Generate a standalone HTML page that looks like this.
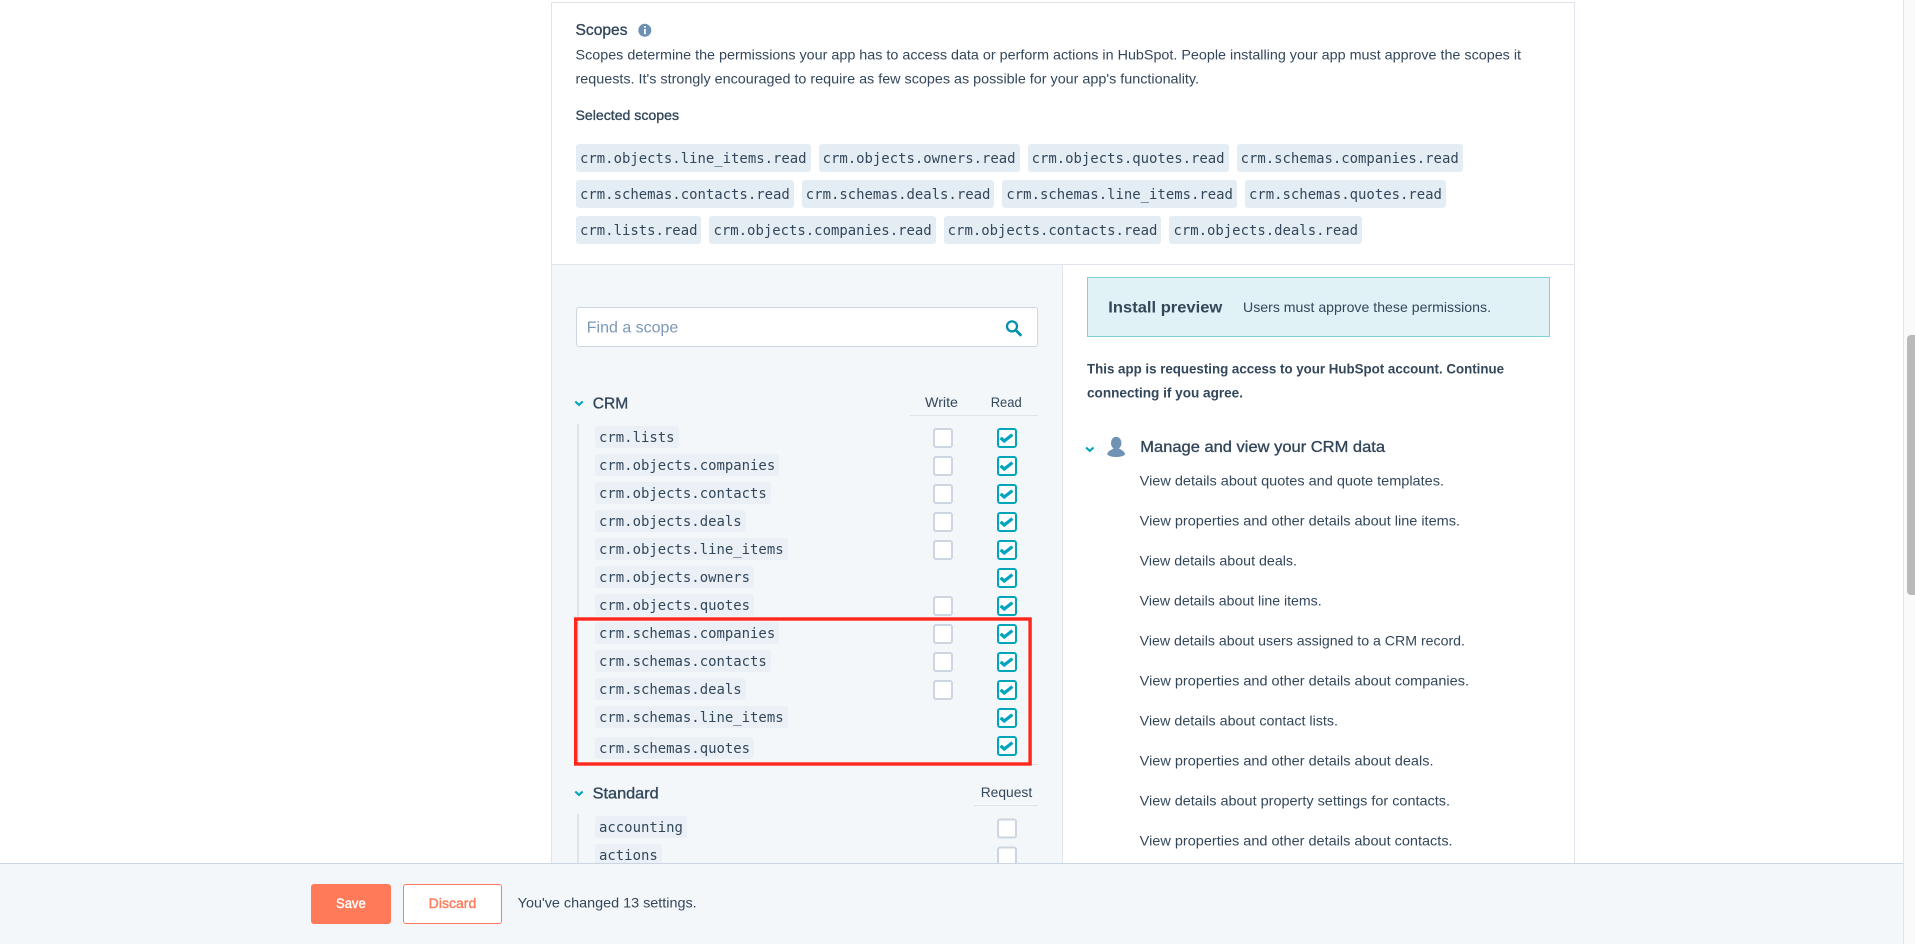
<!DOCTYPE html>
<html lang="en"><head><meta charset="utf-8"><title>Scopes</title>
<style>
html,body{margin:0;padding:0;background:#fff}
body{position:relative;width:1915px;height:944px;overflow:hidden;font-family:"Liberation Sans",sans-serif;color:#33475b}
.a{position:absolute}
.row{position:absolute;left:576px;display:flex;gap:8px}
code{font-family:"DejaVu Sans Mono","Liberation Mono",monospace;font-size:13.95px;color:#33475b;background:#e5edf4;border-radius:3px;padding:0 4px;display:block;white-space:pre}
.row code{height:28px;line-height:31px}
.t{position:absolute;left:595px;height:22px;line-height:25px;background:#eaf0f6}
svg{position:absolute;left:0;top:0}
text{font-family:"Liberation Sans",sans-serif;fill:#33475b;font-size:14px}
.m{stroke:#33475b;stroke-width:.35px}
</style></head>
<body>
<!-- panel frame -->
<div class="a" style="left:551px;top:2px;width:1024px;height:1px;background:#dfe3eb"></div>
<div class="a" style="left:551px;top:2px;width:1px;height:862px;background:#dfe3eb"></div>
<div class="a" style="left:1574px;top:2px;width:1px;height:862px;background:#dfe3eb"></div>
<div class="a" style="left:552px;top:264px;width:1022px;height:1px;background:#dfe3eb"></div>
<div class="a" style="left:552px;top:265px;width:510px;height:598px;background:#f4f7fa"></div>
<div class="a" style="left:1062px;top:265px;width:1px;height:598px;background:#dfe3eb"></div>

<!-- selected scopes -->
<div class="row" style="top:144px"><code>crm.objects.line_items.read</code><code>crm.objects.owners.read</code><code>crm.objects.quotes.read</code><code>crm.schemas.companies.read</code></div>
<div class="row" style="top:180px"><code>crm.schemas.contacts.read</code><code>crm.schemas.deals.read</code><code>crm.schemas.line_items.read</code><code>crm.schemas.quotes.read</code></div>
<div class="row" style="top:216px"><code>crm.lists.read</code><code>crm.objects.companies.read</code><code>crm.objects.contacts.read</code><code>crm.objects.deals.read</code></div>

<!-- search -->
<div class="a" style="left:576px;top:307px;width:460px;height:38px;background:#fff;border:1px solid #cbd6e2;border-radius:3px"></div>

<!-- table rules -->
<div class="a" style="left:910px;top:415px;width:128px;height:1px;background:#dfe3eb"></div>
<div class="a" style="left:974px;top:805px;width:64px;height:1px;background:#dfe3eb"></div>
<div class="a" style="left:1030px;top:764px;width:8px;height:1px;background:#dfe3eb"></div>
<div class="a" style="left:577px;top:424px;width:2px;height:338px;background:#dfe3eb"></div>
<div class="a" style="left:577px;top:814px;width:2px;height:50px;background:#dfe3eb"></div>

<!-- scope names -->
<code class="a t" style="top:426px">crm.lists</code>
<code class="a t" style="top:454px">crm.objects.companies</code>
<code class="a t" style="top:482px">crm.objects.contacts</code>
<code class="a t" style="top:510px">crm.objects.deals</code>
<code class="a t" style="top:538px">crm.objects.line_items</code>
<code class="a t" style="top:566px">crm.objects.owners</code>
<code class="a t" style="top:594px">crm.objects.quotes</code>
<code class="a t" style="top:622px">crm.schemas.companies</code>
<code class="a t" style="top:650px">crm.schemas.contacts</code>
<code class="a t" style="top:678px">crm.schemas.deals</code>
<code class="a t" style="top:706px">crm.schemas.line_items</code>
<code class="a t" style="top:737px">crm.schemas.quotes</code>
<code class="a t" style="top:816px">accounting</code>
<code class="a t" style="top:844px">actions</code>

<!-- install preview box -->
<div class="a" style="left:1087px;top:277px;width:461px;height:58px;background:#e0f2f6;border:1px solid #7fd1de"></div>

<svg width="1915" height="944" viewBox="0 0 1915 944">
<defs>
<g id="off"><rect x="1" y="1" width="18" height="18" rx="2" fill="#fff" stroke="#cbd6e2" stroke-width="2"/></g>
<g id="on"><rect x="1" y="1" width="18" height="18" rx="2" fill="#fff" stroke="#00a4bd" stroke-width="2"/><path d="M3.6 9.8 L7.2 13 L15.4 6.6" fill="none" stroke="#00a4bd" stroke-width="3.2"/></g>
<path id="chev" d="M0.8 0.8 L4.5 4.2 L8.2 0.8" fill="none" stroke="#00a4bd" stroke-width="2.1"/>
</defs>

<text x="575.5" y="35" style="font-size:16px" class="m" textLength="52" lengthAdjust="spacingAndGlyphs">Scopes</text>
<circle cx="644.8" cy="30.3" r="6.5" fill="#6a90b4"/>
<rect x="644" y="26" width="1.8" height="1.8" fill="#fff"/><rect x="644" y="29" width="1.8" height="5.2" fill="#fff"/>
<text x="575.5" y="59.5" textLength="945.5" lengthAdjust="spacingAndGlyphs">Scopes determine the permissions your app has to access data or perform actions in HubSpot. People installing your app must approve the scopes it</text>
<text x="575.5" y="83.5" textLength="623.5" lengthAdjust="spacingAndGlyphs">requests. It's strongly encouraged to require as few scopes as possible for your app's functionality.</text>
<text x="575.5" y="120" class="m" textLength="103.5" lengthAdjust="spacingAndGlyphs">Selected scopes</text>

<text x="586.8" y="332.5" style="font-size:16px;fill:#7c98b6" textLength="91.5" lengthAdjust="spacingAndGlyphs">Find a scope</text>
<circle cx="1012" cy="326.4" r="5" fill="none" stroke="#0091ae" stroke-width="2.3"/>
<path d="M1015.8 330.2 L1021.3 335.7" stroke="#0091ae" stroke-width="2.8" fill="none"/>

<use href="#chev" x="574.5" y="400.7"/>
<text x="592.7" y="408.6" style="font-size:16px" class="m" textLength="35.5" lengthAdjust="spacingAndGlyphs">CRM</text>
<text x="925" y="407" textLength="33" lengthAdjust="spacingAndGlyphs">Write</text>
<text x="990.7" y="407" textLength="31" lengthAdjust="spacingAndGlyphs">Read</text>

<use href="#off" x="933" y="428"/><use href="#off" x="933" y="456"/><use href="#off" x="933" y="484"/><use href="#off" x="933" y="512"/><use href="#off" x="933" y="540"/><use href="#off" x="933" y="596"/><use href="#off" x="933" y="624"/><use href="#off" x="933" y="652"/><use href="#off" x="933" y="680"/>
<use href="#on" x="997" y="428"/><use href="#on" x="997" y="456"/><use href="#on" x="997" y="484"/><use href="#on" x="997" y="512"/><use href="#on" x="997" y="540"/><use href="#on" x="997" y="568"/><use href="#on" x="997" y="596"/><use href="#on" x="997" y="624"/><use href="#on" x="997" y="652"/><use href="#on" x="997" y="680"/><use href="#on" x="997" y="708"/><use href="#on" x="997" y="736"/>

<use href="#chev" x="574.5" y="790.7"/>
<text x="592.7" y="798.6" style="font-size:16px" class="m" textLength="66" lengthAdjust="spacingAndGlyphs">Standard</text>
<text x="980.7" y="797" textLength="51.5" lengthAdjust="spacingAndGlyphs">Request</text>
<use href="#off" x="997" y="818.5"/><use href="#off" x="997" y="846.5"/>

<rect x="575.7" y="619" width="454.4" height="145" fill="none" stroke="#ff261b" stroke-width="3.4"/>

<text x="1108.3" y="312.3" style="font-size:16px;font-weight:bold" textLength="114" lengthAdjust="spacingAndGlyphs">Install preview</text>
<text x="1243" y="312" textLength="248" lengthAdjust="spacingAndGlyphs">Users must approve these permissions.</text>
<text x="1087" y="373.3" style="font-weight:bold" textLength="417" lengthAdjust="spacingAndGlyphs">This app is requesting access to your HubSpot account. Continue</text>
<text x="1087" y="397.5" style="font-weight:bold" textLength="156" lengthAdjust="spacingAndGlyphs">connecting if you agree.</text>

<use href="#chev" x="1085.3" y="446.7"/>
<ellipse cx="1116.2" cy="443" rx="5.2" ry="6.3" fill="#6f92b5"/>
<path d="M1107.3 454.6 C1107.3 451 1111 450.3 1113 448.6 L1119.5 448.6 C1121.5 450.3 1125 451 1125 454.6 C1122 457.8 1110.5 457.8 1107.3 454.6 Z" fill="#6f92b5"/>
<text x="1140.3" y="452" style="font-size:16px" class="m" textLength="244.7" lengthAdjust="spacingAndGlyphs">Manage and view your CRM data</text>

<text x="1139.7" y="485.3" textLength="304.3" lengthAdjust="spacingAndGlyphs">View details about quotes and quote templates.</text>
<text x="1139.7" y="525.3" textLength="320.3" lengthAdjust="spacingAndGlyphs">View properties and other details about line items.</text>
<text x="1139.7" y="565.3" textLength="157.3" lengthAdjust="spacingAndGlyphs">View details about deals.</text>
<text x="1139.7" y="605.3" textLength="182" lengthAdjust="spacingAndGlyphs">View details about line items.</text>
<text x="1139.7" y="645.3" textLength="325.3" lengthAdjust="spacingAndGlyphs">View details about users assigned to a CRM record.</text>
<text x="1139.7" y="685.3" textLength="329.3" lengthAdjust="spacingAndGlyphs">View properties and other details about companies.</text>
<text x="1139.7" y="725.3" textLength="198.3" lengthAdjust="spacingAndGlyphs">View details about contact lists.</text>
<text x="1139.7" y="765.3" textLength="293.8" lengthAdjust="spacingAndGlyphs">View properties and other details about deals.</text>
<text x="1139.7" y="805.3" textLength="310.3" lengthAdjust="spacingAndGlyphs">View details about property settings for contacts.</text>
<text x="1139.7" y="845.3" textLength="312.9" lengthAdjust="spacingAndGlyphs">View properties and other details about contacts.</text>
</svg>

<!-- footer -->
<div class="a" style="left:0;top:863px;width:1903px;height:80px;background:#f4f7fa;border-top:1px solid #cbd6e2"></div>
<div class="a" style="left:311px;top:884px;width:80px;height:40px;background:#ff7a59;border-radius:3px"></div>
<div class="a" style="left:403px;top:884px;width:97px;height:38px;background:#fff;border:1px solid #ff7a59;border-radius:3px"></div>
<!-- scrollbar -->
<div class="a" style="left:1903px;top:0;width:12px;height:944px;background:#fafafa;border-left:1px solid #e4e4e4;box-sizing:border-box"></div>
<div class="a" style="left:1907px;top:335px;width:8px;height:260px;background:#bababa;border-radius:4px 0 0 4px"></div>

<svg width="1915" height="944" viewBox="0 0 1915 944">
<text x="336" y="908" style="font-size:14px;fill:#fff;stroke:#fff;stroke-width:.4px" textLength="29.7" lengthAdjust="spacingAndGlyphs">Save</text>
<text x="428.7" y="908" style="font-size:14px;fill:#ff7a59;stroke:#ff7a59;stroke-width:.4px" textLength="47.6" lengthAdjust="spacingAndGlyphs">Discard</text>
<text x="517.7" y="907.3" textLength="179" lengthAdjust="spacingAndGlyphs">You've changed 13 settings.</text>
</svg>
</body></html>
